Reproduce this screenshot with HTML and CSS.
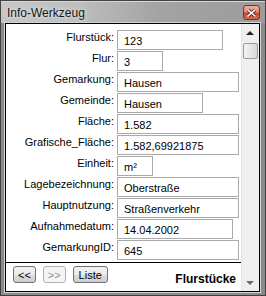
FILE: index.html
```html
<!DOCTYPE html>
<html lang="de">
<head>
  <meta charset="UTF-8" />
  <title>Info-Werkzeug</title>
  <link rel="stylesheet" href="styles.css">
</head>
<body>
  <div class="fenster">
    <div class="titelleiste">
      <span class="titel">Info-Werkzeug</span>
      <button class="schliessen" aria-label="Schließen">
        <svg width="9" height="8" viewBox="0 0 9 8">
          <path d="M1 1 L8 7 M8 1 L1 7" stroke="#5a2318" stroke-width="3.2" stroke-linecap="square"/>
          <path d="M1 1 L8 7 M8 1 L1 7" stroke="#fff" stroke-width="1.6" stroke-linecap="square"/>
        </svg>
      </button>
    </div>

    <div class="rahmen">
      <div class="inhalt">
        <div class="haupt">
          <div class="formular">
            <div class="zeile"><span class="label">Flurstück:</span><div class="feld w106">123</div></div>
            <div class="zeile"><span class="label">Flur:</span><div class="feld w46">3</div></div>
            <div class="zeile"><span class="label">Gemarkung:</span><div class="feld">Hausen</div></div>
            <div class="zeile"><span class="label">Gemeinde:</span><div class="feld w86">Hausen</div></div>
            <div class="zeile"><span class="label">Fläche:</span><div class="feld">1.582</div></div>
            <div class="zeile"><span class="label">Grafische_Fläche:</span><div class="feld">1.582,69921875</div></div>
            <div class="zeile"><span class="label">Einheit:</span><div class="feld w36">m²</div></div>
            <div class="zeile"><span class="label">Lagebezeichnung:</span><div class="feld">Oberstraße</div></div>
            <div class="zeile"><span class="label">Hauptnutzung:</span><div class="feld">Straßenverkehr</div></div>
            <div class="zeile"><span class="label">Aufnahmedatum:</span><div class="feld w116">14.04.2002</div></div>
            <div class="zeile"><span class="label">GemarkungID:</span><div class="feld">645</div></div>
          </div>

          <div class="fuss">
            <button class="knopf">&lt;&lt;</button>
            <button class="knopf" disabled>&gt;&gt;</button>
            <button class="knopf liste">Liste</button>
            <span class="ebene">Flurstücke</span>
          </div>
        </div>

        <!-- Scrollbalken -->
        <div class="scrollbar">
          <div class="pfeil oben"></div>
          <div class="griff"></div>
          <div class="spur"></div>
          <div class="pfeil unten"></div>
        </div>
      </div>
    </div>
  </div>
</body>
</html>
```

FILE: styles.css
```css
:root {
  --rahmen-grau: #8a8a8a;
  --feld-rand: #a9a9a9;
  --text: #000;
}

body {
  margin: 0;
  font-family: 'Liberation Sans', Arial, sans-serif;
  color: var(--text);
}

.fenster {
  width: 266px;
  height: 296px;
  box-sizing: border-box;
  border: 1px solid #424242;
  background-color: var(--rahmen-grau);
  display: flex;
  flex-direction: column;
}

.titelleiste {
  height: 22px;
  flex: none;
  display: flex;
  align-items: center;
  padding: 0 5px 0 6px;
  background: linear-gradient(to right, #c6c6c6 0%, #bdbdbd 30%, #a3a3a3 60%, #9c9c9c 100%);
  box-shadow: inset 0 1px 0 #d8d8d8;
}

.titel {
  font-size: 12px;
  color: #151515;
  text-shadow: 0 0 6px #e6e6e6, 0 0 3px #e6e6e6;
  margin-top: 1px;
}

.schliessen {
  margin-left: auto;
  margin-top: 1px;
  width: 17px;
  height: 15px;
  padding: 0;
  border: 1px solid #7b3125;
  border-radius: 3px;
  background: linear-gradient(to bottom, #efb1a2 0%, #e08a74 45%, #c8472f 55%, #d86a4e 100%);
  display: flex;
  align-items: center;
  justify-content: center;
}

.rahmen {
  flex: 1;
  padding: 0 5px 3px 4px;
  display: flex;
}

.inhalt {
  flex: 1;
  display: flex;
  background-color: white;
  border: 1px solid #000;
  box-shadow: 0 0 0 1px #d4d4d4;
}

.haupt {
  flex: 1;
  display: flex;
  flex-direction: column;
}

/* Formularzeilen */
.formular {
  padding-top: 6px;
  display: flex;
  flex-direction: column;
  gap: 1px;
  border-bottom: 1px solid #000;
  padding-bottom: 2px;
}

.zeile {
  display: flex;
  gap: 3px;
  height: 20px;
}

.label {
  width: 108px;
  text-align: right;
  font-size: 11px;
  line-height: 13px;
  padding-top: 1px;
}

.feld {
  width: 122px;
  box-sizing: border-box;
  height: 20px;
  border: 1px solid var(--feld-rand);
  font-size: 11px;
  line-height: 18px;
  padding: 1px 0 0 6px;
}

.w106 { width: 106px; }
.w46 { width: 46px; }
.w86 { width: 86px; }
.w36 { width: 36px; }
.w116 { width: 116px; }

/* Fussleiste */
.fuss {
  flex: 1;
  display: flex;
  align-items: flex-start;
  gap: 7px;
  padding: 3px 5px 0 7px;
}

.knopf {
  height: 17px;
  min-width: 21px;
  padding: 0 4px;
  font-family: 'Liberation Sans', Arial, sans-serif;
  font-size: 11px;
  line-height: 14px;
  color: #000;
  border: 1px solid #707070;
  border-radius: 3px;
  background: linear-gradient(to bottom, #f2f2f2 0%, #ebebeb 50%, #dddddd 51%, #cfcfcf 100%);
}

.knopf:disabled {
  color: #8f8f8f;
  border-color: #adb2b5;
  background: #f4f4f4;
}

.liste {
  width: 35px;
}

.ebene {
  margin-left: auto;
  margin-top: 6px;
  font-size: 12px;
  font-weight: bold;
}

/* Scrollbalken */
.scrollbar {
  width: 18px;
  display: flex;
  flex-direction: column;
  background-color: #efefef;
  box-shadow: inset 1px 0 0 #e4e4e4;
}

.pfeil {
  height: 17px;
  flex: none;
  display: flex;
  align-items: center;
  justify-content: center;
}

.pfeil::after {
  content: "";
  border-left: 4px solid transparent;
  border-right: 4px solid transparent;
}

.oben::after {
  border-bottom: 4px solid #222;
}

.unten::after {
  border-top: 4px solid #6a6a6a;
}

.griff {
  height: 16px;
  margin: 2px 1px 0 2px;
  box-sizing: border-box;
  border: 1px solid #9a9a9a;
  border-radius: 2px;
  background: linear-gradient(to right, #f4f4f4 0%, #e6e6e6 50%, #d6d6d6 100%);
}

.spur {
  flex: 1;
}
```
